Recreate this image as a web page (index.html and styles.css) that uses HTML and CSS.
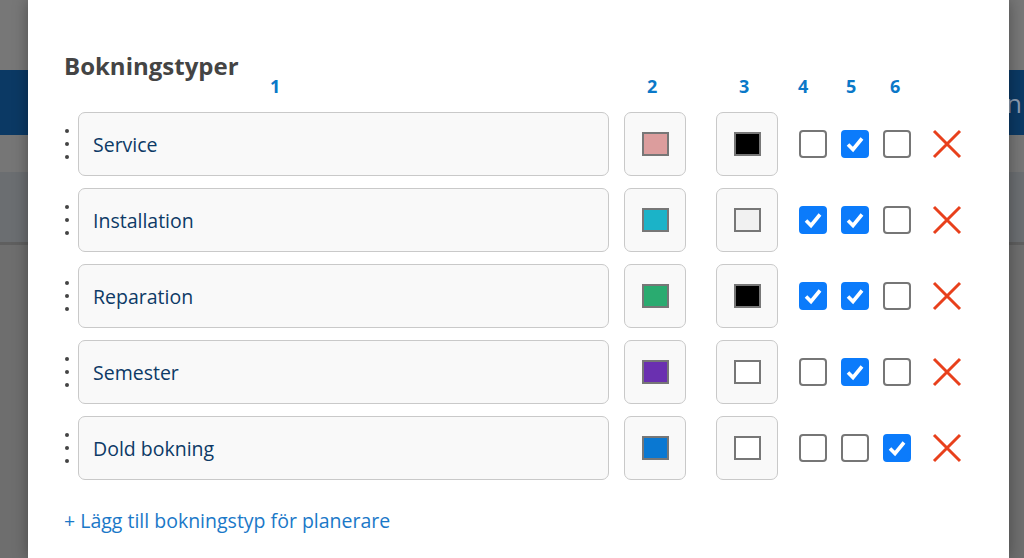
FILE: index.html
```html
<!DOCTYPE html>
<html lang="sv">
<head>
  <meta charset="UTF-8">
  <meta name="viewport" content="width=device-width, initial-scale=1.0">
  <title>Bokningstyper</title>
  <link rel="stylesheet" href="styles.css">
</head>
<body>
  <div class="backdrop">
    <div class="band top"></div>
    <div class="band header"><span class="header-title">Plan</span></div>
    <div class="band nav"></div>
    <div class="band toolbar"></div>
    <div class="band rest"></div>
  </div>

  <div class="modal">
    <h2>Bokningstyper</h2>
    <div class="row head">
      <span class="num n1">1</span>
      <span class="num n2">2</span>
      <span class="num n3">3</span>
      <span class="num n4">4</span>
      <span class="num n5">5</span>
      <span class="num n6">6</span>
    </div>

    <div class="row">
      <div class="handle"><i></i><i></i><i></i></div>
      <div class="field name">Service</div>
      <div class="field color"><span class="swatch" style="background:#dc9d9d"></span></div>
      <div class="field color fg"><span class="swatch" style="background:#000000"></span></div>
      <span class="check"></span>
      <span class="check on"><svg viewBox="0 0 28 28"><path d="M7 14.5 L12 19.5 L21 8.5"/></svg></span>
      <span class="check"></span>
      <span class="remove"><svg viewBox="0 0 30 30"><path d="M2 2 L28 28 M28 2 L2 28"/></svg></span>
    </div>

    <div class="row">
      <div class="handle"><i></i><i></i><i></i></div>
      <div class="field name">Installation</div>
      <div class="field color"><span class="swatch" style="background:#1bb3c8"></span></div>
      <div class="field color fg"><span class="swatch" style="background:#f1f1f1"></span></div>
      <span class="check on"><svg viewBox="0 0 28 28"><path d="M7 14.5 L12 19.5 L21 8.5"/></svg></span>
      <span class="check on"><svg viewBox="0 0 28 28"><path d="M7 14.5 L12 19.5 L21 8.5"/></svg></span>
      <span class="check"></span>
      <span class="remove"><svg viewBox="0 0 30 30"><path d="M2 2 L28 28 M28 2 L2 28"/></svg></span>
    </div>

    <div class="row">
      <div class="handle"><i></i><i></i><i></i></div>
      <div class="field name">Reparation</div>
      <div class="field color"><span class="swatch" style="background:#2aab70"></span></div>
      <div class="field color fg"><span class="swatch" style="background:#000000"></span></div>
      <span class="check on"><svg viewBox="0 0 28 28"><path d="M7 14.5 L12 19.5 L21 8.5"/></svg></span>
      <span class="check on"><svg viewBox="0 0 28 28"><path d="M7 14.5 L12 19.5 L21 8.5"/></svg></span>
      <span class="check"></span>
      <span class="remove"><svg viewBox="0 0 30 30"><path d="M2 2 L28 28 M28 2 L2 28"/></svg></span>
    </div>

    <div class="row">
      <div class="handle"><i></i><i></i><i></i></div>
      <div class="field name">Semester</div>
      <div class="field color"><span class="swatch" style="background:#6a30b0"></span></div>
      <div class="field color fg"><span class="swatch" style="background:#ffffff"></span></div>
      <span class="check"></span>
      <span class="check on"><svg viewBox="0 0 28 28"><path d="M7 14.5 L12 19.5 L21 8.5"/></svg></span>
      <span class="check"></span>
      <span class="remove"><svg viewBox="0 0 30 30"><path d="M2 2 L28 28 M28 2 L2 28"/></svg></span>
    </div>

    <div class="row">
      <div class="handle"><i></i><i></i><i></i></div>
      <div class="field name">Dold bokning</div>
      <div class="field color"><span class="swatch" style="background:#0a78d2"></span></div>
      <div class="field color fg"><span class="swatch" style="background:#ffffff"></span></div>
      <span class="check"></span>
      <span class="check"></span>
      <span class="check on"><svg viewBox="0 0 28 28"><path d="M7 14.5 L12 19.5 L21 8.5"/></svg></span>
      <span class="remove"><svg viewBox="0 0 30 30"><path d="M2 2 L28 28 M28 2 L2 28"/></svg></span>
    </div>

    <a class="add" href="#">+ Lägg till bokningstyp för planerare</a>
  </div>
</body>
</html>
```

FILE: styles.css
```css
html, body {
  margin: 0;
  height: 100%;
  overflow: hidden;
  font-family: 'Open Sans', 'Noto Sans', sans-serif;
}

.backdrop {
  display: flex;
  flex-direction: column;
  height: 100%;
}

.band.top {
  height: 70px;
  background: #777777;
}

.band.header {
  height: 65px;
  background: #0b3964;
  display: flex;
  align-items: center;
  justify-content: flex-end;
}

.header-title {
  color: #8c9bb0;
  font-size: 26px;
  margin-right: 2px;
}

.band.nav {
  height: 37px;
  background: #767676;
}

.band.toolbar {
  height: 70px;
  background: #6b6e71;
  border-bottom: 3px solid #5f5f5f;
}

.band.rest {
  flex: 1;
  background: #6e6e6e;
}

.modal {
  position: absolute;
  left: 28px;
  top: 0;
  width: 981px;
  height: 100%;
  box-sizing: border-box;
  background: #ffffff;
  padding: 50px 0 0 36px;
  box-shadow: 0 0 14px rgba(0, 0, 0, 0.35);
}

h2 {
  margin: 0;
  font-size: 24px;
  font-weight: 700;
  color: #444444;
  line-height: 32px;
}

.row {
  display: flex;
  align-items: center;
  height: 64px;
  margin-bottom: 12px;
}

.row.head {
  height: 22px;
  margin: -7px 0 15px;
  align-items: flex-start;
}

.num {
  font-size: 18px;
  font-weight: 700;
  color: #0a78c8;
  line-height: 22px;
  width: 11px;
}

.n1 { margin-left: 206px; }
.n2 { margin-left: 366px; }
.n3 { margin-left: 81px; }
.n4 { margin-left: 48px; }
.n5 { margin-left: 37px; }
.n6 { margin-left: 33px; }

.handle {
  width: 14px;
  height: 30px;
  display: flex;
  flex-direction: column;
  justify-content: space-between;
  padding-left: 1px;
  box-sizing: border-box;
}

.handle i {
  display: block;
  width: 4px;
  height: 4px;
  border-radius: 50%;
  background: #444444;
}

.field {
  height: 64px;
  box-sizing: border-box;
  border: 1.5px solid #c9c9c9;
  border-radius: 7px;
  background: #f9f9f9;
}

.name {
  width: 531px;
  display: flex;
  align-items: center;
  padding-left: 14px;
  font-size: 19.5px;
  color: #0d3a66;
}

.color {
  width: 62px;
  margin-left: 15px;
  display: flex;
  align-items: center;
  justify-content: center;
}

.color.fg {
  margin-left: 30px;
}

.swatch {
  width: 27px;
  height: 24px;
  box-sizing: border-box;
  border: 2px solid #777777;
}

.check {
  width: 28px;
  height: 28px;
  box-sizing: border-box;
  border: 2px solid #767676;
  border-radius: 4px;
  margin-left: 14px;
  background: #ffffff;
}

.fg + .check {
  margin-left: 21px;
}

.check.on {
  background: #0b7bfb;
  border-color: #0b7bfb;
}

.check svg {
  display: block;
  width: 28px;
  height: 28px;
  margin: -2px;
  fill: none;
  stroke: #ffffff;
  stroke-width: 3.6;
}

.remove {
  margin-left: 21px;
  width: 30px;
  height: 30px;
}

.remove svg {
  display: block;
  width: 30px;
  height: 30px;
  stroke: #e8401c;
  stroke-width: 3;
}

.add {
  display: inline-block;
  margin-top: 15px;
  font-size: 19.5px;
  color: #1a78c8;
  text-decoration: none;
}
```
